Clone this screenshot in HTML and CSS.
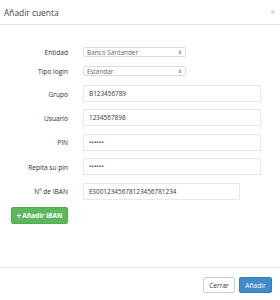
FILE: index.html
```html
<!DOCTYPE html>
<html lang="es">
<head>
<meta charset="utf-8">
<title>Añadir cuenta</title>
<link rel="stylesheet" href="styles.css">
</head>
<body>
<div class="modal">
  <div class="modal-header">
    <h4 class="modal-title">Añadir cuenta</h4>
    <span class="close">×</span>
  </div>
  <div class="modal-body">
    <div class="row row-select">
      <label class="lbl">Entidad</label>
      <div class="select"><span>Banco Santander</span><span class="arrows">⬍</span></div>
    </div>
    <div class="row row-select">
      <label class="lbl">Tipo login</label>
      <div class="select"><span>Estándar</span><span class="arrows">⬍</span></div>
    </div>
    <div class="inputs">
      <div class="row">
        <label class="lbl">Grupo</label>
        <div class="input">B123456789</div>
      </div>
      <div class="row">
        <label class="lbl">Usuario</label>
        <div class="input">1234567898</div>
      </div>
      <div class="row">
        <label class="lbl">PIN</label>
        <div class="input"><span class="dots">••••••</span></div>
      </div>
      <div class="row">
        <label class="lbl">Repita su pin</label>
        <div class="input"><span class="dots">••••••</span></div>
      </div>
      <div class="row">
        <label class="lbl">Nº de IBAN</label>
        <div class="input input-iban">ES0012345678123456781234</div>
      </div>
      <div class="btn-row">
        <button class="btn btn-success"><span class="plus">+</span> Añadir IBAN</button>
      </div>
    </div>
  </div>
  <div class="modal-footer">
    <button class="btn btn-default">Cerrar</button>
    <button class="btn btn-primary">Añadir</button>
  </div>
</div>
</body>
</html>
```
FILE: styles.css
```css
* { box-sizing: border-box; }
html, body { margin: 0; padding: 0; background: #fff; }
body {
  font-family: "Open Sans", "DejaVu Sans", sans-serif;
  font-size: 6.6px;
  color: #333;
}
.modal {
  width: 280px;
  height: 300px;
  display: flex;
  flex-direction: column;
}
.modal-header {
  height: 25px;
  border-bottom: 1px solid #e5e5e5;
  display: flex;
  align-items: center;
  justify-content: space-between;
  padding: 0 5px 0 4px;
}
.modal-title {
  margin: 0;
  font-size: 8.4px;
  font-weight: 400;
  color: #444;
}
.close {
  font-size: 8px;
  font-weight: 700;
  color: #c8c8c8;
  line-height: 1;
}
.modal-body {
  flex: 1;
  padding-top: 22px;
}
.row {
  display: grid;
  grid-template-columns: 68px auto;
  column-gap: 15px;
  align-items: center;
  justify-items: start;
}
.row-select { height: 9px; margin-bottom: 10px; }
.lbl {
  justify-self: end;
  color: #2f2f2f;
  padding-top: 1px;
}
.select {
  width: 103px;
  height: 9.5px;
  border: 1px solid #ddd;
  border-radius: 2px;
  display: flex;
  align-items: center;
  justify-content: space-between;
  padding: 0 3px 0 3px;
  color: #666;
  font-size: 6.4px;
  box-shadow: 0 0 1px #e4e4f4;
}
.arrows {
  font-size: 5px;
  color: #888;
}
.inputs {
  display: flex;
  flex-direction: column;
  gap: 7.4px;
  margin-top: 1px;
}
.input {
  width: 178px;
  height: 17px;
  border: 1px solid #e8e8e8;
  display: flex;
  align-items: center;
  padding-left: 5px;
  color: #333;
  font-size: 6.4px;
}
.input-iban { width: 157px; }
.dots {
  font-size: 6.5px;
  letter-spacing: 0;
  color: #445;
}
.btn-row { padding-left: 11px; }
.btn {
  font-family: inherit;
  border-radius: 2px;
  border: 1px solid transparent;
  font-size: 6.6px;
  padding: 0;
  display: inline-flex;
  align-items: center;
  justify-content: center;
}
.btn-success {
  width: 57px;
  height: 17px;
  background: #5cb85c;
  border-color: #4cae4c;
  color: #fff;
  font-weight: 700;
}
.plus { font-size: 8px; margin-right: 1px; }
.modal-footer {
  height: 33px;
  border-top: 1px solid #e5e5e5;
  display: flex;
  justify-content: flex-end;
  align-items: flex-start;
  gap: 4px;
  padding: 9px 8px 0 0;
}
.btn-default {
  width: 32px;
  height: 16px;
  background: #fff;
  border-color: #ccc;
  color: #333;
}
.btn-primary {
  width: 33px;
  height: 16px;
  background: #428bca;
  border-color: #357ebd;
  color: #fff;
}
```
